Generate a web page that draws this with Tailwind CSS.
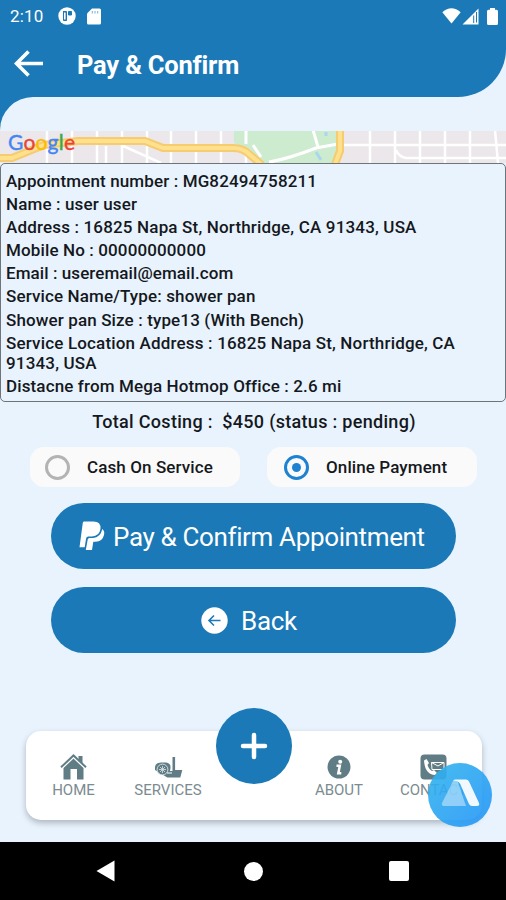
<!DOCTYPE html>
<html lang="en">
<head>
<meta charset="utf-8">
<title>Pay &amp; Confirm</title>
<script src="https://cdn.jsdelivr.net/npm/@tailwindcss/browser@4"></script>
</head>
<body class="bg-[#e8f3fe]">
<div class="flex h-[900px] w-[506px] flex-col overflow-hidden bg-[#e8f3fe] font-['Roboto',sans-serif] text-[#15181c]">
  <header class="h-[97px] shrink-0 rounded-br-[48px] bg-[#1a79b6] text-white">
    <div class="flex h-8 items-center pl-[10px] pr-[8px]">
      <span class="w-[48px] text-[17px] leading-none tracking-[0.200px]">2:10</span>
      <svg class="size-[18px]" viewBox="0 0 18 18"><circle cx="9" cy="9" r="8.700" fill="#fff"/><path d="M5 4.500h3.500v9H5.500V4.500zM10.500 4.500h3v3.500h-3z" fill="#1a79b6" stroke="#1a79b6" stroke-linejoin="round"/><path d="M6.800 5.500v7" stroke="#fff" stroke-width="1.600"/></svg>
      <svg class="ml-[11px] h-[17px] w-[14px]" viewBox="0 0 14 17"><path d="M5 .5h7.500q1.500 0 1.500 1.500v13q0 1.500-1.500 1.500h-11Q0 16.500 0 15V5.500z" fill="#fff"/><path d="M5.300 3v2.500M8 3v2.500M10.700 3v2.500" stroke="#1a79b6" stroke-width=".6"/></svg>
      <div class="ml-auto flex items-center">
        <svg class="h-4 w-[19px]" viewBox="0 0 19 16"><path d="M.3 4.200Q9.500-3.500 18.700 4.200L9.500 15.500z" fill="#fff"/></svg>
        <svg class="ml-[1px] h-[17px] w-[17px]" viewBox="0 0 17 17"><path d="M.5 16.500L16.500.500v16z" fill="#fff"/><path d="M11.700 7.500v7.500M14.500 4v10.500" stroke="#1a79b6" stroke-width="1"/></svg>
        <svg class="ml-[8px] h-[17px] w-[11px]" viewBox="0 0 11 17"><path d="M3 0h5v1.800h1.500Q11 1.800 11 3.300V15.500Q11 17 9.500 17h-8Q0 17 0 15.500V3.300Q0 1.800 1.500 1.800H3z" fill="#fff"/></svg>
      </div>
    </div>
    <div class="flex h-[64px] items-center pl-[14px]">
      <svg class="-mt-[2px] h-[27px] w-[30px]" viewBox="0 0 30 27"><path d="M29 13.500H3M14.500 1.500L2.500 13.500l12 12" fill="none" stroke="#fff" stroke-width="3.600"/></svg>
      <h1 class="mt-[2px] ml-[33px] text-[25.500px] leading-8 font-bold tracking-[-0.2px]">Pay &amp; Confirm</h1>
    </div>
  </header>

  <div class="h-[34px] shrink-0 bg-[linear-gradient(90deg,#1a79b6_50%,#e8f3fe_50%)]"><div class="h-full rounded-tl-[33px] bg-[#e8f3fe]"></div></div>

  <div class="relative h-[32px] shrink-0 bg-[#ebe7ea]">
    <svg class="block h-[32px] w-[506px]" viewBox="0 1 506 32">
      <path d="M47 0v33M72 0v33M97 0v33M106 16v17M122 0v33M147 0v33M171 0v33M196 0v33M221 0v33M246 0v33M370 0v33M395 0v33M420 0v33M445 0v33M470 0v33M495 0l3 33M344 15h162M396 20q3 7 10 8h100M121 15l40 18" fill="none" stroke="#fff" stroke-width="2.500"/>
      <path d="M234 0h106v33h-75q-12-12-31-20z" fill="#cdebcf"/>
      <path d="M246 0v14" stroke="#fff" stroke-width="3"/>
      <path d="M269 32Q288 29 316 18L338 14M313 0l5 17M253 15l8 12" fill="none" stroke="#fff" stroke-width="3"/>
      <path d="M326 2v4M316 22l5 8" stroke="#a8d8ee" stroke-width="3"/>
      <path d="M0 28h12L44 15 78 11h67l18 7h70q10 0 16 6l13 11M340 0v21l-6 16" fill="none" stroke="#f5cc70" stroke-width="8"/>
      <path d="M0 28h12L44 15 78 11h67l18 7h70q10 0 16 6l13 11M340 0v21l-6 16" fill="none" stroke="#ffe08c" stroke-width="4"/>
    </svg>
    <div class="absolute top-[-2px] left-[8px] h-[30px] font-['Lato',sans-serif] text-[21px] leading-[26px] tracking-[0.2px] [-webkit-text-stroke:0.4px_currentColor]"><span class="text-[#4285f4]">G</span><span class="text-[#ea4335]">o</span><span class="text-[#fbbc05]">o</span><span class="text-[#4285f4]">g</span><span class="text-[#34a853]">l</span><span class="text-[#ea4335]">e</span></div>
  </div>

  <section class="flex h-[239px] shrink-0 flex-col gap-[3.200px] rounded-[5px] border-[1.500px] border-[#6d747a] pt-[6.500px] pl-[5px] text-[17px] leading-[20px] font-medium tracking-[0.130px]">
    <p>Appointment number : MG82494758211</p>
    <p>Name : user user</p>
    <p class="tracking-[0.170px]">Address : 16825 Napa St, Northridge, CA 91343, USA</p>
    <p>Mobile No : 00000000000</p>
    <p class="tracking-[0.080px]">Email : useremail@email.com</p>
    <p>Service Name/Type: shower pan</p>
    <p>Shower pan Size : type13 (With Bench)</p>
    <p class="tracking-[0.170px]">Service Location Address : 16825 Napa St, Northridge, CA<br>91343, USA</p>
    <p>Distacne from Mega Hotmop Office : 2.6 mi</p>
  </section>

  <p class="mt-[9px] pl-[2px] text-center text-[18px] leading-[22px] font-medium tracking-[0.300px] whitespace-pre">Total Costing :  $450 (status : pending)</p>

  <div class="mt-[14px] flex shrink-0 gap-[27px] pl-[30px] text-[17px] font-medium tracking-[0.100px]">
    <label class="flex h-[40px] w-[210px] items-center rounded-[14px] bg-[#fafafa] pl-[15px]">
      <span class="size-[25px] rounded-full border-3 border-[#b3b3b3]"></span>
      <span class="mt-[1px] ml-[17px]">Cash On Service</span>
    </label>
    <label class="flex h-[40px] w-[210px] items-center rounded-[14px] bg-[#fafafa] pl-[17px]">
      <span class="flex size-[25px] items-center justify-center rounded-full border-3 border-[#1e82d2]"><span class="size-[9px] rounded-full bg-[#1e82d2]"></span></span>
      <span class="mt-[1px] ml-[17px]">Online Payment</span>
    </label>
  </div>

  <button class="mt-[16px] ml-[51px] flex h-[66px] w-[405px] shrink-0 items-center rounded-full bg-[#1a79b6] pl-[28px] text-[26px] tracking-[-0.360px] text-white">
    <svg class="h-[30px] w-[26px]" viewBox="0 0 26 30"><path d="M3.800 1.800Q4 .5 5.300.5H14.500Q22 .5 21.500 7.800 20.500 15.200 13 15.500H9.300Q7.500 15.500 7.100 17.500L5.700 26.200H.5z" fill="#fff"/><path d="M23.300 8Q26 10 25 14 23.300 20.800 16.500 20.800h-2.200L13 29H6.800l1.900-10.500Q9 16.900 10.500 16.900H14Q21.500 16.500 23.300 8z" fill="#fff"/></svg>
    <span class="mt-[2px] ml-[8px] whitespace-nowrap">Pay &amp; Confirm Appointment</span>
  </button>
  <button class="mt-[18px] ml-[51px] flex h-[66px] w-[405px] shrink-0 items-center rounded-full bg-[#1a79b6] pl-[150px] text-[26px] tracking-[-0.300px] text-white">
    <svg class="size-[27px]" viewBox="0 0 27 27"><circle cx="13.500" cy="13.500" r="13.200" fill="#fff"/><path d="M19.500 13.500H8.500M13 8.500l-5 5 5 5" fill="none" stroke="#1a79b6" stroke-width="1.600"/></svg>
    <span class="mt-[2px] ml-[13px]">Back</span>
  </button>

  <div class="relative mt-[78px] ml-[26px] h-[89px] w-[456px] shrink-0">
    <nav class="flex h-full rounded-[15px] bg-white pt-[23px] text-[15px] leading-[18px] text-[#7b8b91] shadow-[0_3px_6px_rgba(0,0,0,0.25)]">
      <a class="flex w-[95px] flex-col items-center">
        <svg class="h-[26px] w-[27px]" viewBox="0 0 27 26"><path d="M3.500 14L13.500 4.500 23.500 14V25.500H17V15h-6.500v10.500h-7z" fill="#607d86"/><path d="M18.500 5.500V2h4v8z" fill="#607d86"/><path d="M1 13.300L13.500 1.500 26 13.300" fill="none" stroke="#607d86" stroke-width="2"/><path d="M3 13.800L13.500 4 24 13.800" fill="none" stroke="#fff" stroke-opacity=".6" stroke-width=".7"/></svg>
        <span class="mt-[1px]">HOME</span>
      </a>
      <a class="flex w-[94px] flex-col items-center">
        <svg class="h-[26px] w-[29px]" viewBox="0 0 29 26"><path d="M1 13Q1.500 8.500 7 8.500h5Q17 9 16.500 14l-.5 3h2.500V3h2.600v13h7.200l-2 7.500h-13L1 16z" fill="#607d86"/><circle cx="8.500" cy="15.500" r="5.400" fill="#607d86" stroke="#dce5e7" stroke-width=".9"/><path d="M8.500 12v7M5 15.500h7M6 13l5 5M11 13l-5 5" stroke="#dce5e7" stroke-width=".8"/><path d="M13 19h5" stroke="#fff" stroke-width="1"/></svg>
        <span class="mt-[1px]">SERVICES</span>
      </a>
      <a class="ml-[77px] flex w-[94px] flex-col items-center">
        <svg class="h-[26px] w-[24px]" viewBox="0 0 24 26"><circle cx="12" cy="13" r="11.500" fill="#607d86"/><circle cx="13.200" cy="7.700" r="2" fill="#fff"/><path d="M9.500 11.800h3.300l-1.500 7.500h3" fill="none" stroke="#fff" stroke-width="2.500"/></svg>
        <span class="mt-[1px]">ABOUT</span>
      </a>
      <a class="flex w-[95px] flex-col items-center">
        <svg class="h-[26px] w-[27px]" viewBox="0 0 27 26"><rect x=".5" y=".5" width="26" height="25" rx="4" fill="#607d86"/><path d="M4 6.500l2.500-1.500 2.500 4-1.500 2q1.500 4.500 4.500 6l2-1 3 3-2 2Q5 20.500 4 6.500z" fill="#fff"/><path d="M11.500 8.500h12.500v7H12zl6.500 3.500 6-3.500" fill="none" stroke="#fff" stroke-width="1"/></svg>
        <span class="mt-[1px]">CONTACT</span>
      </a>
    </nav>
    <div class="absolute top-[-23px] left-[190px] flex size-[76px] items-center justify-center rounded-full bg-[#1a79b6]">
      <svg class="size-[28px]" viewBox="0 0 28 28"><path d="M14 3v22M3 14h22" stroke="#fff" stroke-width="4.500" stroke-linecap="round"/></svg>
    </div>
    <svg class="absolute top-[32px] left-[402px] size-[64px]" viewBox="0 0 64 64"><defs><linearGradient id="g" x1="0" y1="0" x2="1" y2="1"><stop offset="0" stop-color="#32b5ee"/><stop offset="1" stop-color="#2494f7"/></linearGradient></defs><circle cx="32" cy="32" r="32" fill="url(#g)" fill-opacity=".9"/><path d="M25 18q2-2.500 4.500 0L38 43H15q-2-1-1-3z" fill="#fff" fill-opacity=".42"/><path d="M25 17.500q1-1 3-1h10q2 0 3 2L51 40q1 3-2 3h-5q-2 0-3-2L32 20.500q-2-3-7-3z" fill="#fff" fill-opacity=".93"/></svg>
  </div>

  <footer class="mt-auto flex h-[58px] shrink-0 items-center bg-black pl-[96px]">
    <svg class="h-[22px] w-[19px]" viewBox="0 0 19 22"><path d="M.5 11L18.500.5v21z" fill="#fff"/></svg>
    <span class="ml-[129px] size-[19px] rounded-full bg-white"></span>
    <span class="ml-[126px] size-[20px] rounded-[2px] bg-white"></span>
  </footer>
</div>
</body>
</html>
